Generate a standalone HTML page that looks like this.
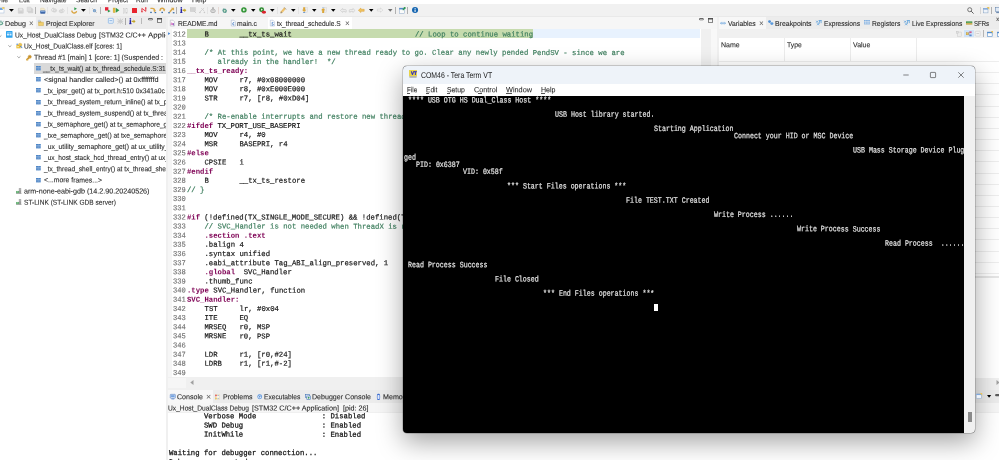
<!DOCTYPE html>
<html><head><meta charset="utf-8"><title>STM32CubeIDE Debug</title>
<style>
html,body{margin:0;padding:0;background:#fff;}
body{width:999px;height:460px;position:relative;overflow:hidden;}
body div,body svg,body span.t{position:absolute;}
span.t{white-space:pre;line-height:12px;height:12px;transform-origin:0 50%;filter:opacity(0.999);}
svg{overflow:visible}
</style></head><body>
<div style="left:0.00px;top:0.00px;width:999.00px;height:3.80px;background:#ffffff;"></div>
<div style="left:0.00px;top:3.80px;width:999.00px;height:13.00px;background:#f1f1f1;"></div>
<div style="left:0.00px;top:16.50px;width:999.00px;height:444.00px;background:#f0f0f0;"></div>
<span class="t" style="left:-2.60px;top:-6px;font:normal 7.2px/12px 'Liberation Sans', sans-serif;color:#2a2a2a;transform:matrix(0.9574,0.0005,0,1,0,0.21);-webkit-text-stroke:0.1px #2a2a2a;">File</span>
<span class="t" style="left:19.00px;top:-6px;font:normal 7.2px/12px 'Liberation Sans', sans-serif;color:#2a2a2a;transform:matrix(0.8716,0.0005,0,1,0,0.21);-webkit-text-stroke:0.1px #2a2a2a;">Edit</span>
<span class="t" style="left:40.00px;top:-6px;font:normal 7.2px/12px 'Liberation Sans', sans-serif;color:#2a2a2a;transform:matrix(0.9339,0.0005,0,1,0,0.21);-webkit-text-stroke:0.1px #2a2a2a;">Navigate</span>
<span class="t" style="left:76.00px;top:-6px;font:normal 7.2px/12px 'Liberation Sans', sans-serif;color:#2a2a2a;transform:matrix(0.9218,0.0005,0,1,0,0.21);-webkit-text-stroke:0.1px #2a2a2a;">Search</span>
<span class="t" style="left:107.50px;top:-6px;font:normal 7.2px/12px 'Liberation Sans', sans-serif;color:#2a2a2a;transform:matrix(0.8939,0.0005,0,1,0,0.21);-webkit-text-stroke:0.1px #2a2a2a;">Project</span>
<span class="t" style="left:136.00px;top:-6px;font:normal 7.2px/12px 'Liberation Sans', sans-serif;color:#2a2a2a;transform:matrix(0.9100,0.0005,0,1,0,0.21);-webkit-text-stroke:0.1px #2a2a2a;">Run</span>
<span class="t" style="left:157.40px;top:-6px;font:normal 7.2px/12px 'Liberation Sans', sans-serif;color:#2a2a2a;transform:matrix(1.0009,0.0005,0,1,0,0.21);-webkit-text-stroke:0.1px #2a2a2a;">Window</span>
<span class="t" style="left:192.00px;top:-6px;font:normal 7.2px/12px 'Liberation Sans', sans-serif;color:#2a2a2a;transform:matrix(0.9664,0.0005,0,1,0,0.21);-webkit-text-stroke:0.1px #2a2a2a;">Help</span>
<div style="left:0.00px;top:16.50px;width:165.50px;height:12.80px;background:#ececec;"></div>
<div style="left:0.00px;top:16.50px;width:36.20px;height:12.80px;background:#f7f7f7;"></div>
<div style="left:0.00px;top:29.30px;width:165.50px;height:431.00px;background:#ffffff;"></div>
<span class="t" style="left:5.00px;top:17px;font:normal 7.2px/12px 'Liberation Sans', sans-serif;color:#2a2a2a;transform:matrix(0.9912,0.0005,0,1,0,0.91);-webkit-text-stroke:0.1px #2a2a2a;">Debug</span>
<span class="t" style="left:29.20px;top:17px;font:normal 9px/12px 'Liberation Sans', sans-serif;color:#666;transform:matrix(0.8736,0.0005,0,1,0,0.18);">×</span>
<span class="t" style="left:46.00px;top:17px;font:normal 7.2px/12px 'Liberation Sans', sans-serif;color:#2a2a2a;transform:matrix(0.9484,0.0005,0,1,0,0.91);-webkit-text-stroke:0.1px #2a2a2a;">Project Explorer</span>
<div style="left:34.00px;top:63.25px;width:131.50px;height:10.90px;background:#d9d9d9;"></div>
<div style="left:0;top:0;width:165.5px;height:460px;overflow:hidden">
<span class="t" style="left:14.80px;top:29px;font:normal 7.2px/12px 'Liberation Sans', sans-serif;color:#2a2a2a;transform:matrix(0.9303,0.0005,0,1,0,0.41);-webkit-text-stroke:0.1px #2a2a2a;">Ux_Host_DualClass Debug</span>
<span class="t" style="left:99.20px;top:29px;font:normal 7.2px/12px 'Liberation Sans', sans-serif;color:#2a2a2a;transform:matrix(0.9763,0.0005,0,1,0,0.41);-webkit-text-stroke:0.1px #2a2a2a;">[STM32 C/C++</span>
<span class="t" style="left:148.20px;top:29px;font:normal 7.2px/12px 'Liberation Sans', sans-serif;color:#2a2a2a;transform:matrix(1.0886,0.0005,0,1,0,0.41);-webkit-text-stroke:0.1px #2a2a2a;">Application]</span>
<span class="t" style="left:24.30px;top:40px;font:normal 7.2px/12px 'Liberation Sans', sans-serif;color:#2a2a2a;transform:matrix(0.9282,0.0005,0,1,0,0.56);-webkit-text-stroke:0.1px #2a2a2a;">Ux_Host_DualClass.elf [cores: 1]</span>
<span class="t" style="left:34.00px;top:51px;font:normal 7.2px/12px 'Liberation Sans', sans-serif;color:#2a2a2a;transform:matrix(0.9696,0.0005,0,1,0,0.71);-webkit-text-stroke:0.1px #2a2a2a;">Thread #1 [main] 1 [core: 1] (Suspended :  Step)</span>
<span class="t" style="left:43.40px;top:62px;font:normal 7.2px/12px 'Liberation Sans', sans-serif;color:#2a2a2a;transform:matrix(0.9036,0.0005,0,1,0,0.86);-webkit-text-stroke:0.1px #2a2a2a;">__tx_ts_wait() at</span>
<span class="t" style="left:92.70px;top:62px;font:normal 7.2px/12px 'Liberation Sans', sans-serif;color:#2a2a2a;transform:matrix(0.9147,0.0005,0,1,0,0.86);-webkit-text-stroke:0.1px #2a2a2a;">tx_thread_schedule.S:312</span>
<span class="t" style="left:44.00px;top:74px;font:normal 7.2px/12px 'Liberation Sans', sans-serif;color:#2a2a2a;transform:matrix(1.0088,0.0005,0,1,0,0.01);-webkit-text-stroke:0.1px #2a2a2a;">&lt;signal handler called&gt;() at 0xfffffffd</span>
<span class="t" style="left:43.60px;top:85px;font:normal 7.2px/12px 'Liberation Sans', sans-serif;color:#2a2a2a;transform:matrix(0.9365,0.0005,0,1,0,0.16);-webkit-text-stroke:0.1px #2a2a2a;">_tx_ipsr_get() at tx_port.h:510 0x341a0c</span>
<span class="t" style="left:43.60px;top:96px;font:normal 7.2px/12px 'Liberation Sans', sans-serif;color:#2a2a2a;transform:matrix(0.9303,0.0005,0,1,0,0.31);-webkit-text-stroke:0.1px #2a2a2a;">_tx_thread_system_return_inline() at tx_port.h</span>
<span class="t" style="left:43.60px;top:107px;font:normal 7.2px/12px 'Liberation Sans', sans-serif;color:#2a2a2a;transform:matrix(0.9323,0.0005,0,1,0,0.46);-webkit-text-stroke:0.1px #2a2a2a;">_tx_thread_system_suspend() at tx_thread_sys</span>
<span class="t" style="left:43.60px;top:118px;font:normal 7.2px/12px 'Liberation Sans', sans-serif;color:#2a2a2a;transform:matrix(0.9356,0.0005,0,1,0,0.61);-webkit-text-stroke:0.1px #2a2a2a;">_tx_semaphore_get() at tx_semaphore_get.c</span>
<span class="t" style="left:43.60px;top:129px;font:normal 7.2px/12px 'Liberation Sans', sans-serif;color:#2a2a2a;transform:matrix(0.9351,0.0005,0,1,0,0.76);-webkit-text-stroke:0.1px #2a2a2a;">_txe_semaphore_get() at txe_semaphore_get</span>
<span class="t" style="left:43.60px;top:140px;font:normal 7.2px/12px 'Liberation Sans', sans-serif;color:#2a2a2a;transform:matrix(0.9383,0.0005,0,1,0,0.91);-webkit-text-stroke:0.1px #2a2a2a;">_ux_utility_semaphore_get() at ux_utility_se</span>
<span class="t" style="left:43.60px;top:152px;font:normal 7.2px/12px 'Liberation Sans', sans-serif;color:#2a2a2a;transform:matrix(0.9179,0.0005,0,1,0,0.06);-webkit-text-stroke:0.1px #2a2a2a;">_ux_host_stack_hcd_thread_entry() at ux_host</span>
<span class="t" style="left:43.60px;top:163px;font:normal 7.2px/12px 'Liberation Sans', sans-serif;color:#2a2a2a;transform:matrix(0.9170,0.0005,0,1,0,0.21);-webkit-text-stroke:0.1px #2a2a2a;">_tx_thread_shell_entry() at tx_thread_shell</span>
<span class="t" style="left:44.00px;top:174px;font:normal 7.2px/12px 'Liberation Sans', sans-serif;color:#2a2a2a;transform:matrix(0.9552,0.0005,0,1,0,0.36);-webkit-text-stroke:0.1px #2a2a2a;">&lt;...more frames...&gt;</span>
<span class="t" style="left:24.00px;top:185px;font:normal 7.2px/12px 'Liberation Sans', sans-serif;color:#2a2a2a;transform:matrix(0.9970,0.0005,0,1,0,0.51);-webkit-text-stroke:0.1px #2a2a2a;">arm-none-eabi-gdb (14.2.90.20240526)</span>
<span class="t" style="left:24.00px;top:196px;font:normal 7.2px/12px 'Liberation Sans', sans-serif;color:#2a2a2a;transform:matrix(0.9140,0.0005,0,1,0,0.66);-webkit-text-stroke:0.1px #2a2a2a;">ST-LINK (ST-LINK GDB server)</span>
</div>
<div style="left:167.50px;top:16.50px;width:549.00px;height:12.80px;background:#f6f6f6;"></div>
<div style="left:0.00px;top:16.20px;width:999.00px;height:0.70px;background:#e9e9e9;"></div>
<div style="left:268.00px;top:16.50px;width:83.50px;height:12.20px;background:#ffffff;"></div>
<div style="left:268.00px;top:28.60px;width:83.50px;height:0.90px;background:#8fb3e6;"></div>
<div style="left:167.50px;top:29.40px;width:549.00px;height:348.00px;background:#ffffff;"></div>
<div style="left:167.50px;top:29.40px;width:4.50px;height:348.00px;background:#f6f6f6;"></div>
<span class="t" style="left:177.50px;top:17px;font:normal 7.2px/12px 'Liberation Sans', sans-serif;color:#2a2a2a;transform:matrix(0.9243,0.0005,0,1,0,0.91);-webkit-text-stroke:0.1px #2a2a2a;">README.md</span>
<span class="t" style="left:237.00px;top:17px;font:normal 7.2px/12px 'Liberation Sans', sans-serif;color:#2a2a2a;transform:matrix(0.9446,0.0005,0,1,0,0.91);-webkit-text-stroke:0.1px #2a2a2a;">main.c</span>
<span class="t" style="left:277.40px;top:17px;font:normal 7.2px/12px 'Liberation Sans', sans-serif;color:#2a2a2a;transform:matrix(0.9147,0.0005,0,1,0,0.91);-webkit-text-stroke:0.1px #2a2a2a;">tx_thread_schedule.S</span>
<span class="t" style="left:344.50px;top:17px;font:normal 9px/12px 'Liberation Sans', sans-serif;color:#666;transform:matrix(0.9116,0.0005,0,1,0,0.18);">×</span>
<div style="left:187.20px;top:29.10px;width:513.10px;height:8.90px;background:#e8f2fe;"></div>
<div style="left:187.20px;top:29.10px;width:345.80px;height:8.90px;background:#c6dbae;"></div>
<div style="left:701.00px;top:29.40px;width:10.00px;height:348.00px;background:#f0f0f0;"></div>
<div style="left:711.00px;top:29.40px;width:5.50px;height:348.00px;background:#f8f8f8;"></div>
<span class="t" style="left:172.80px;top:28px;font:normal 7.5px/12px 'Liberation Mono', monospace;color:#727272;transform:matrix(0.9545,0.0005,0,1,0,0.40);-webkit-text-stroke:0.15px #727272;">312</span>
<span class="t" style="left:187.20px;top:28px;font:normal 7.5px/12px 'Liberation Mono', monospace;color:#1a1a1a;transform:matrix(0.9720,0.0005,0,1,0,0.40);-webkit-text-stroke:0.2px #1a1a1a;">    B       __tx_ts_wait                            </span>
<span class="t" style="left:414.70px;top:28px;font:normal 7.5px/12px 'Liberation Mono', monospace;color:#3f7f5f;transform:matrix(0.9720,0.0005,0,1,0,0.40);-webkit-text-stroke:0.2px #3f7f5f;">// Loop to continue waiting</span>
<span class="t" style="left:172.80px;top:37px;font:normal 7.5px/12px 'Liberation Mono', monospace;color:#727272;transform:matrix(0.9545,0.0005,0,1,0,0.55);-webkit-text-stroke:0.15px #727272;">313</span>
<span class="t" style="left:172.80px;top:46px;font:normal 7.5px/12px 'Liberation Mono', monospace;color:#727272;transform:matrix(0.9545,0.0005,0,1,0,0.70);-webkit-text-stroke:0.15px #727272;">314</span>
<span class="t" style="left:187.20px;top:46px;font:normal 7.5px/12px 'Liberation Mono', monospace;color:#3f7f5f;transform:matrix(0.9721,0.0005,0,1,0,0.70);-webkit-text-stroke:0.2px #3f7f5f;">    /* At this point, we have a new thread ready to go. Clear any newly pended PendSV - since we are</span>
<span class="t" style="left:172.80px;top:55px;font:normal 7.5px/12px 'Liberation Mono', monospace;color:#727272;transform:matrix(0.9545,0.0005,0,1,0,0.85);-webkit-text-stroke:0.15px #727272;">315</span>
<span class="t" style="left:187.20px;top:55px;font:normal 7.5px/12px 'Liberation Mono', monospace;color:#3f7f5f;transform:matrix(0.9720,0.0005,0,1,0,0.85);-webkit-text-stroke:0.2px #3f7f5f;">       already in the handler!  */</span>
<span class="t" style="left:172.80px;top:65px;font:normal 7.5px/12px 'Liberation Mono', monospace;color:#727272;transform:matrix(0.9545,0.0005,0,1,0,0.00);-webkit-text-stroke:0.15px #727272;">316</span>
<span class="t" style="left:187.20px;top:65px;font:bold 7.5px/12px 'Liberation Mono', monospace;color:#7f0055;transform:matrix(0.9720,0.0005,0,1,0,0.00);-webkit-text-stroke:0.05px #7f0055;">__tx_ts_ready:</span>
<span class="t" style="left:172.80px;top:74px;font:normal 7.5px/12px 'Liberation Mono', monospace;color:#727272;transform:matrix(0.9545,0.0005,0,1,0,0.15);-webkit-text-stroke:0.15px #727272;">317</span>
<span class="t" style="left:187.20px;top:74px;font:normal 7.5px/12px 'Liberation Mono', monospace;color:#1a1a1a;transform:matrix(0.9720,0.0005,0,1,0,0.15);-webkit-text-stroke:0.2px #1a1a1a;">    MOV     r7, #0x08000000</span>
<span class="t" style="left:172.80px;top:83px;font:normal 7.5px/12px 'Liberation Mono', monospace;color:#727272;transform:matrix(0.9545,0.0005,0,1,0,0.30);-webkit-text-stroke:0.15px #727272;">318</span>
<span class="t" style="left:187.20px;top:83px;font:normal 7.5px/12px 'Liberation Mono', monospace;color:#1a1a1a;transform:matrix(0.9720,0.0005,0,1,0,0.30);-webkit-text-stroke:0.2px #1a1a1a;">    MOV     r8, #0xE000E000</span>
<span class="t" style="left:172.80px;top:92px;font:normal 7.5px/12px 'Liberation Mono', monospace;color:#727272;transform:matrix(0.9545,0.0005,0,1,0,0.45);-webkit-text-stroke:0.15px #727272;">319</span>
<span class="t" style="left:187.20px;top:92px;font:normal 7.5px/12px 'Liberation Mono', monospace;color:#1a1a1a;transform:matrix(0.9720,0.0005,0,1,0,0.45);-webkit-text-stroke:0.2px #1a1a1a;">    STR     r7, [r8, #0xD04]</span>
<span class="t" style="left:172.80px;top:101px;font:normal 7.5px/12px 'Liberation Mono', monospace;color:#727272;transform:matrix(0.9545,0.0005,0,1,0,0.60);-webkit-text-stroke:0.15px #727272;">320</span>
<span class="t" style="left:172.80px;top:110px;font:normal 7.5px/12px 'Liberation Mono', monospace;color:#727272;transform:matrix(0.9545,0.0005,0,1,0,0.75);-webkit-text-stroke:0.15px #727272;">321</span>
<span class="t" style="left:187.20px;top:110px;font:normal 7.5px/12px 'Liberation Mono', monospace;color:#3f7f5f;transform:matrix(0.9720,0.0005,0,1,0,0.75);-webkit-text-stroke:0.2px #3f7f5f;">    /* Re-enable interrupts and restore new thread.  */</span>
<span class="t" style="left:172.80px;top:119px;font:normal 7.5px/12px 'Liberation Mono', monospace;color:#727272;transform:matrix(0.9545,0.0005,0,1,0,0.90);-webkit-text-stroke:0.15px #727272;">322</span>
<span class="t" style="left:187.20px;top:119px;font:bold 7.5px/12px 'Liberation Mono', monospace;color:#7f0055;transform:matrix(0.9717,0.0005,0,1,0,0.90);-webkit-text-stroke:0.05px #7f0055;">#ifdef</span>
<span class="t" style="left:213.45px;top:119px;font:normal 7.5px/12px 'Liberation Mono', monospace;color:#1a1a1a;transform:matrix(0.9721,0.0005,0,1,0,0.90);-webkit-text-stroke:0.2px #1a1a1a;"> TX_PORT_USE_BASEPRI</span>
<span class="t" style="left:172.80px;top:129px;font:normal 7.5px/12px 'Liberation Mono', monospace;color:#727272;transform:matrix(0.9545,0.0005,0,1,0,0.05);-webkit-text-stroke:0.15px #727272;">323</span>
<span class="t" style="left:187.20px;top:129px;font:normal 7.5px/12px 'Liberation Mono', monospace;color:#1a1a1a;transform:matrix(0.9720,0.0005,0,1,0,0.05);-webkit-text-stroke:0.2px #1a1a1a;">    MOV     r4, #0</span>
<span class="t" style="left:172.80px;top:138px;font:normal 7.5px/12px 'Liberation Mono', monospace;color:#727272;transform:matrix(0.9545,0.0005,0,1,0,0.20);-webkit-text-stroke:0.15px #727272;">324</span>
<span class="t" style="left:187.20px;top:138px;font:normal 7.5px/12px 'Liberation Mono', monospace;color:#1a1a1a;transform:matrix(0.9719,0.0005,0,1,0,0.20);-webkit-text-stroke:0.2px #1a1a1a;">    MSR     BASEPRI, r4</span>
<span class="t" style="left:172.80px;top:147px;font:normal 7.5px/12px 'Liberation Mono', monospace;color:#727272;transform:matrix(0.9545,0.0005,0,1,0,0.35);-webkit-text-stroke:0.15px #727272;">325</span>
<span class="t" style="left:187.20px;top:147px;font:bold 7.5px/12px 'Liberation Mono', monospace;color:#7f0055;transform:matrix(0.9715,0.0005,0,1,0,0.35);-webkit-text-stroke:0.05px #7f0055;">#else</span>
<span class="t" style="left:172.80px;top:156px;font:normal 7.5px/12px 'Liberation Mono', monospace;color:#727272;transform:matrix(0.9545,0.0005,0,1,0,0.50);-webkit-text-stroke:0.15px #727272;">326</span>
<span class="t" style="left:187.20px;top:156px;font:normal 7.5px/12px 'Liberation Mono', monospace;color:#1a1a1a;transform:matrix(0.9720,0.0005,0,1,0,0.50);-webkit-text-stroke:0.2px #1a1a1a;">    CPSIE   i</span>
<span class="t" style="left:172.80px;top:165px;font:normal 7.5px/12px 'Liberation Mono', monospace;color:#727272;transform:matrix(0.9545,0.0005,0,1,0,0.65);-webkit-text-stroke:0.15px #727272;">327</span>
<span class="t" style="left:187.20px;top:165px;font:bold 7.5px/12px 'Liberation Mono', monospace;color:#7f0055;transform:matrix(0.9717,0.0005,0,1,0,0.65);-webkit-text-stroke:0.05px #7f0055;">#endif</span>
<span class="t" style="left:172.80px;top:174px;font:normal 7.5px/12px 'Liberation Mono', monospace;color:#727272;transform:matrix(0.9545,0.0005,0,1,0,0.80);-webkit-text-stroke:0.15px #727272;">328</span>
<span class="t" style="left:187.20px;top:174px;font:normal 7.5px/12px 'Liberation Mono', monospace;color:#1a1a1a;transform:matrix(0.9720,0.0005,0,1,0,0.80);-webkit-text-stroke:0.2px #1a1a1a;">    B       __tx_ts_restore</span>
<span class="t" style="left:172.80px;top:183px;font:normal 7.5px/12px 'Liberation Mono', monospace;color:#727272;transform:matrix(0.9545,0.0005,0,1,0,0.95);-webkit-text-stroke:0.15px #727272;">329</span>
<span class="t" style="left:187.20px;top:183px;font:normal 7.5px/12px 'Liberation Mono', monospace;color:#3f7f5f;transform:matrix(0.9714,0.0005,0,1,0,0.95);-webkit-text-stroke:0.2px #3f7f5f;">// }</span>
<span class="t" style="left:172.80px;top:193px;font:normal 7.5px/12px 'Liberation Mono', monospace;color:#727272;transform:matrix(0.9545,0.0005,0,1,0,0.10);-webkit-text-stroke:0.15px #727272;">330</span>
<span class="t" style="left:172.80px;top:202px;font:normal 7.5px/12px 'Liberation Mono', monospace;color:#727272;transform:matrix(0.9545,0.0005,0,1,0,0.25);-webkit-text-stroke:0.15px #727272;">331</span>
<span class="t" style="left:172.80px;top:211px;font:normal 7.5px/12px 'Liberation Mono', monospace;color:#727272;transform:matrix(0.9545,0.0005,0,1,0,0.40);-webkit-text-stroke:0.15px #727272;">332</span>
<span class="t" style="left:187.20px;top:211px;font:bold 7.5px/12px 'Liberation Mono', monospace;color:#7f0055;transform:matrix(0.9711,0.0005,0,1,0,0.40);-webkit-text-stroke:0.05px #7f0055;">#if</span>
<span class="t" style="left:200.32px;top:211px;font:normal 7.5px/12px 'Liberation Mono', monospace;color:#1a1a1a;transform:matrix(0.9720,0.0005,0,1,0,0.40);-webkit-text-stroke:0.2px #1a1a1a;"> (!defined(TX_SINGLE_MODE_SECURE) &amp;&amp; !defined(TX_SINGLE_MODE_NON_SECURE))</span>
<span class="t" style="left:172.80px;top:220px;font:normal 7.5px/12px 'Liberation Mono', monospace;color:#727272;transform:matrix(0.9545,0.0005,0,1,0,0.55);-webkit-text-stroke:0.15px #727272;">333</span>
<span class="t" style="left:187.20px;top:220px;font:normal 7.5px/12px 'Liberation Mono', monospace;color:#3f7f5f;transform:matrix(0.9720,0.0005,0,1,0,0.55);-webkit-text-stroke:0.2px #3f7f5f;">    // SVC_Handler is not needed when ThreadX is running in single mode.</span>
<span class="t" style="left:172.80px;top:229px;font:normal 7.5px/12px 'Liberation Mono', monospace;color:#727272;transform:matrix(0.9545,0.0005,0,1,0,0.70);-webkit-text-stroke:0.15px #727272;">334</span>
<span class="t" style="left:187.20px;top:229px;font:bold 7.5px/12px 'Liberation Mono', monospace;color:#7f0055;transform:matrix(0.9720,0.0005,0,1,0,0.70);-webkit-text-stroke:0.05px #7f0055;">    .section .text</span>
<span class="t" style="left:172.80px;top:238px;font:normal 7.5px/12px 'Liberation Mono', monospace;color:#727272;transform:matrix(0.9545,0.0005,0,1,0,0.85);-webkit-text-stroke:0.15px #727272;">335</span>
<span class="t" style="left:187.20px;top:238px;font:normal 7.5px/12px 'Liberation Mono', monospace;color:#1a1a1a;transform:matrix(0.9720,0.0005,0,1,0,0.85);-webkit-text-stroke:0.2px #1a1a1a;">    .balign 4</span>
<span class="t" style="left:172.80px;top:248px;font:normal 7.5px/12px 'Liberation Mono', monospace;color:#727272;transform:matrix(0.9545,0.0005,0,1,0,0.00);-webkit-text-stroke:0.15px #727272;">336</span>
<span class="t" style="left:187.20px;top:248px;font:normal 7.5px/12px 'Liberation Mono', monospace;color:#1a1a1a;transform:matrix(0.9720,0.0005,0,1,0,0.00);-webkit-text-stroke:0.2px #1a1a1a;">    .syntax unified</span>
<span class="t" style="left:172.80px;top:257px;font:normal 7.5px/12px 'Liberation Mono', monospace;color:#727272;transform:matrix(0.9545,0.0005,0,1,0,0.15);-webkit-text-stroke:0.15px #727272;">337</span>
<span class="t" style="left:187.20px;top:257px;font:normal 7.5px/12px 'Liberation Mono', monospace;color:#1a1a1a;transform:matrix(0.9720,0.0005,0,1,0,0.15);-webkit-text-stroke:0.2px #1a1a1a;">    .eabi_attribute Tag_ABI_align_preserved, 1</span>
<span class="t" style="left:172.80px;top:266px;font:normal 7.5px/12px 'Liberation Mono', monospace;color:#727272;transform:matrix(0.9545,0.0005,0,1,0,0.30);-webkit-text-stroke:0.15px #727272;">338</span>
<span class="t" style="left:187.20px;top:266px;font:bold 7.5px/12px 'Liberation Mono', monospace;color:#7f0055;transform:matrix(0.9719,0.0005,0,1,0,0.30);-webkit-text-stroke:0.05px #7f0055;">    .global</span>
<span class="t" style="left:235.32px;top:266px;font:normal 7.5px/12px 'Liberation Mono', monospace;color:#1a1a1a;transform:matrix(0.9720,0.0005,0,1,0,0.30);-webkit-text-stroke:0.2px #1a1a1a;">  SVC_Handler</span>
<span class="t" style="left:172.80px;top:275px;font:normal 7.5px/12px 'Liberation Mono', monospace;color:#727272;transform:matrix(0.9545,0.0005,0,1,0,0.45);-webkit-text-stroke:0.15px #727272;">339</span>
<span class="t" style="left:187.20px;top:275px;font:normal 7.5px/12px 'Liberation Mono', monospace;color:#1a1a1a;transform:matrix(0.9720,0.0005,0,1,0,0.45);-webkit-text-stroke:0.2px #1a1a1a;">    .thumb_func</span>
<span class="t" style="left:172.80px;top:284px;font:normal 7.5px/12px 'Liberation Mono', monospace;color:#727272;transform:matrix(0.9545,0.0005,0,1,0,0.60);-webkit-text-stroke:0.15px #727272;">340</span>
<span class="t" style="left:187.20px;top:284px;font:bold 7.5px/12px 'Liberation Mono', monospace;color:#7f0055;transform:matrix(0.9715,0.0005,0,1,0,0.60);-webkit-text-stroke:0.05px #7f0055;">.type</span>
<span class="t" style="left:209.07px;top:284px;font:normal 7.5px/12px 'Liberation Mono', monospace;color:#1a1a1a;transform:matrix(0.9719,0.0005,0,1,0,0.60);-webkit-text-stroke:0.2px #1a1a1a;"> SVC_Handler, function</span>
<span class="t" style="left:172.80px;top:293px;font:normal 7.5px/12px 'Liberation Mono', monospace;color:#727272;transform:matrix(0.9545,0.0005,0,1,0,0.75);-webkit-text-stroke:0.15px #727272;">341</span>
<span class="t" style="left:187.20px;top:293px;font:bold 7.5px/12px 'Liberation Mono', monospace;color:#7f0055;transform:matrix(0.9719,0.0005,0,1,0,0.75);-webkit-text-stroke:0.05px #7f0055;">SVC_Handler:</span>
<span class="t" style="left:172.80px;top:302px;font:normal 7.5px/12px 'Liberation Mono', monospace;color:#727272;transform:matrix(0.9545,0.0005,0,1,0,0.90);-webkit-text-stroke:0.15px #727272;">342</span>
<span class="t" style="left:187.20px;top:302px;font:normal 7.5px/12px 'Liberation Mono', monospace;color:#1a1a1a;transform:matrix(0.9721,0.0005,0,1,0,0.90);-webkit-text-stroke:0.2px #1a1a1a;">    TST     lr, #0x04</span>
<span class="t" style="left:172.80px;top:312px;font:normal 7.5px/12px 'Liberation Mono', monospace;color:#727272;transform:matrix(0.9545,0.0005,0,1,0,0.05);-webkit-text-stroke:0.15px #727272;">343</span>
<span class="t" style="left:187.20px;top:312px;font:normal 7.5px/12px 'Liberation Mono', monospace;color:#1a1a1a;transform:matrix(0.9720,0.0005,0,1,0,0.05);-webkit-text-stroke:0.2px #1a1a1a;">    ITE     EQ</span>
<span class="t" style="left:172.80px;top:321px;font:normal 7.5px/12px 'Liberation Mono', monospace;color:#727272;transform:matrix(0.9545,0.0005,0,1,0,0.20);-webkit-text-stroke:0.15px #727272;">344</span>
<span class="t" style="left:187.20px;top:321px;font:normal 7.5px/12px 'Liberation Mono', monospace;color:#1a1a1a;transform:matrix(0.9720,0.0005,0,1,0,0.20);-webkit-text-stroke:0.2px #1a1a1a;">    MRSEQ   r0, MSP</span>
<span class="t" style="left:172.80px;top:330px;font:normal 7.5px/12px 'Liberation Mono', monospace;color:#727272;transform:matrix(0.9545,0.0005,0,1,0,0.35);-webkit-text-stroke:0.15px #727272;">345</span>
<span class="t" style="left:187.20px;top:330px;font:normal 7.5px/12px 'Liberation Mono', monospace;color:#1a1a1a;transform:matrix(0.9720,0.0005,0,1,0,0.35);-webkit-text-stroke:0.2px #1a1a1a;">    MRSNE   r0, PSP</span>
<span class="t" style="left:172.80px;top:339px;font:normal 7.5px/12px 'Liberation Mono', monospace;color:#727272;transform:matrix(0.9545,0.0005,0,1,0,0.50);-webkit-text-stroke:0.15px #727272;">346</span>
<span class="t" style="left:172.80px;top:348px;font:normal 7.5px/12px 'Liberation Mono', monospace;color:#727272;transform:matrix(0.9545,0.0005,0,1,0,0.65);-webkit-text-stroke:0.15px #727272;">347</span>
<span class="t" style="left:187.20px;top:348px;font:normal 7.5px/12px 'Liberation Mono', monospace;color:#1a1a1a;transform:matrix(0.9719,0.0005,0,1,0,0.65);-webkit-text-stroke:0.2px #1a1a1a;">    LDR     r1, [r0,#24]</span>
<span class="t" style="left:172.80px;top:357px;font:normal 7.5px/12px 'Liberation Mono', monospace;color:#727272;transform:matrix(0.9545,0.0005,0,1,0,0.80);-webkit-text-stroke:0.15px #727272;">348</span>
<span class="t" style="left:187.20px;top:357px;font:normal 7.5px/12px 'Liberation Mono', monospace;color:#1a1a1a;transform:matrix(0.9719,0.0005,0,1,0,0.80);-webkit-text-stroke:0.2px #1a1a1a;">    LDRB    r1, [r1,#-2]</span>
<span class="t" style="left:172.80px;top:366px;font:normal 7.5px/12px 'Liberation Mono', monospace;color:#727272;transform:matrix(0.9545,0.0005,0,1,0,0.95);-webkit-text-stroke:0.15px #727272;">349</span>
<div style="left:167.50px;top:377.50px;width:549.00px;height:9.40px;background:#f0f0f0;"></div>
<div style="left:167.50px;top:377.50px;width:18.70px;height:10.50px;background:#f6f6f6;"></div>
<svg style="left:189.50px;top:379.80px" width="4" height="5" viewBox="0 0 4 5"><path d="M3.5 0 L0.3 2.5 L3.5 5 Z" fill="#a0a0a0"/></svg>
<div style="left:718.60px;top:16.50px;width:280.40px;height:12.80px;background:#ececec;"></div>
<div style="left:718.60px;top:16.50px;width:47.20px;height:12.80px;background:#f7f7f7;"></div>
<div style="left:718.60px;top:29.30px;width:280.40px;height:8.60px;background:#f0f0f0;"></div>
<div style="left:718.60px;top:37.90px;width:280.40px;height:342.00px;background:#ffffff;"></div>
<span class="t" style="left:727.80px;top:17px;font:normal 7.2px/12px 'Liberation Sans', sans-serif;color:#2a2a2a;transform:matrix(0.9410,0.0005,0,1,0,0.91);-webkit-text-stroke:0.1px #2a2a2a;">Variables</span>
<span class="t" style="left:775.40px;top:17px;font:normal 7.2px/12px 'Liberation Sans', sans-serif;color:#2a2a2a;transform:matrix(0.9640,0.0005,0,1,0,0.91);-webkit-text-stroke:0.1px #2a2a2a;">Breakpoints</span>
<span class="t" style="left:824.00px;top:17px;font:normal 7.2px/12px 'Liberation Sans', sans-serif;color:#2a2a2a;transform:matrix(0.9194,0.0005,0,1,0,0.91);-webkit-text-stroke:0.1px #2a2a2a;">Expressions</span>
<span class="t" style="left:871.70px;top:17px;font:normal 7.2px/12px 'Liberation Sans', sans-serif;color:#2a2a2a;transform:matrix(0.9322,0.0005,0,1,0,0.91);-webkit-text-stroke:0.1px #2a2a2a;">Registers</span>
<span class="t" style="left:911.70px;top:17px;font:normal 7.2px/12px 'Liberation Sans', sans-serif;color:#2a2a2a;transform:matrix(0.9256,0.0005,0,1,0,0.91);-webkit-text-stroke:0.1px #2a2a2a;">Live Expressions</span>
<span class="t" style="left:973.70px;top:17px;font:normal 7.2px/12px 'Liberation Sans', sans-serif;color:#2a2a2a;transform:matrix(0.8348,0.0005,0,1,0,0.91);-webkit-text-stroke:0.1px #2a2a2a;">SFRs</span>
<span class="t" style="left:758.60px;top:17px;font:normal 9px/12px 'Liberation Sans', sans-serif;color:#666;transform:matrix(0.9116,0.0005,0,1,0,0.18);">×</span>
<span class="t" style="left:721.00px;top:39px;font:normal 7.2px/12px 'Liberation Sans', sans-serif;color:#2a2a2a;transform:matrix(0.9746,0.0005,0,1,0,0.31);-webkit-text-stroke:0.1px #2a2a2a;">Name</span>
<span class="t" style="left:787.00px;top:39px;font:normal 7.2px/12px 'Liberation Sans', sans-serif;color:#2a2a2a;transform:matrix(0.9491,0.0005,0,1,0,0.31);-webkit-text-stroke:0.1px #2a2a2a;">Type</span>
<span class="t" style="left:852.70px;top:39px;font:normal 7.2px/12px 'Liberation Sans', sans-serif;color:#2a2a2a;transform:matrix(0.9687,0.0005,0,1,0,0.31);-webkit-text-stroke:0.1px #2a2a2a;">Value</span>
<div style="left:783.90px;top:37.90px;width:0.80px;height:23.40px;background:#ececec;"></div>
<div style="left:849.90px;top:37.90px;width:0.80px;height:23.40px;background:#ececec;"></div>
<div style="left:915.60px;top:37.90px;width:0.80px;height:23.40px;background:#ececec;"></div>
<div style="left:718.60px;top:61.00px;width:280.40px;height:0.80px;background:#eeeeee;"></div>
<div style="left:718.60px;top:72.15px;width:280.40px;height:0.80px;background:#eeeeee;"></div>
<div style="left:718.60px;top:83.30px;width:280.40px;height:0.80px;background:#eeeeee;"></div>
<div style="left:718.60px;top:94.45px;width:280.40px;height:0.80px;background:#eeeeee;"></div>
<div style="left:718.60px;top:105.60px;width:280.40px;height:0.80px;background:#eeeeee;"></div>
<div style="left:718.60px;top:116.75px;width:280.40px;height:0.80px;background:#eeeeee;"></div>
<div style="left:718.60px;top:127.90px;width:280.40px;height:0.80px;background:#eeeeee;"></div>
<div style="left:718.60px;top:139.05px;width:280.40px;height:0.80px;background:#eeeeee;"></div>
<div style="left:718.60px;top:150.20px;width:280.40px;height:0.80px;background:#eeeeee;"></div>
<div style="left:718.60px;top:161.35px;width:280.40px;height:0.80px;background:#eeeeee;"></div>
<div style="left:718.60px;top:172.50px;width:280.40px;height:0.80px;background:#eeeeee;"></div>
<div style="left:718.60px;top:183.65px;width:280.40px;height:0.80px;background:#eeeeee;"></div>
<div style="left:718.60px;top:194.80px;width:280.40px;height:0.80px;background:#eeeeee;"></div>
<div style="left:718.60px;top:205.95px;width:280.40px;height:0.80px;background:#eeeeee;"></div>
<div style="left:718.60px;top:217.10px;width:280.40px;height:0.80px;background:#eeeeee;"></div>
<div style="left:718.60px;top:228.25px;width:280.40px;height:0.80px;background:#eeeeee;"></div>
<div style="left:718.60px;top:239.40px;width:280.40px;height:0.80px;background:#eeeeee;"></div>
<div style="left:718.60px;top:250.55px;width:280.40px;height:0.80px;background:#eeeeee;"></div>
<div style="left:718.60px;top:261.70px;width:280.40px;height:0.80px;background:#eeeeee;"></div>
<div style="left:718.60px;top:272.85px;width:280.40px;height:0.80px;background:#eeeeee;"></div>
<div style="left:718.60px;top:275.50px;width:280.40px;height:2.20px;background:#e6e6e6;"></div>
<div style="left:718.60px;top:277.50px;width:280.40px;height:100.00px;background:#ffffff;"></div>
<div style="left:718.60px;top:377.50px;width:280.40px;height:9.40px;background:#f0f0f0;"></div>
<svg style="left:995.50px;top:379.80px" width="4" height="5" viewBox="0 0 4 5"><path d="M0.5 0 L3.7 2.5 L0.5 5 Z" fill="#a0a0a0"/></svg>
<div style="left:167.50px;top:389.60px;width:831.50px;height:13.60px;background:#ececec;"></div>
<div style="left:167.50px;top:389.60px;width:45.80px;height:13.60px;background:#f7f7f7;"></div>
<div style="left:167.50px;top:403.20px;width:831.50px;height:9.30px;background:#f6f6f6;"></div>
<div style="left:167.50px;top:412.50px;width:831.50px;height:48.00px;background:#ffffff;"></div>
<span class="t" style="left:177.00px;top:391px;font:normal 7.2px/12px 'Liberation Sans', sans-serif;color:#2a2a2a;transform:matrix(0.9858,0.0005,0,1,0,0.31);-webkit-text-stroke:0.1px #2a2a2a;">Console</span>
<span class="t" style="left:222.50px;top:391px;font:normal 7.2px/12px 'Liberation Sans', sans-serif;color:#2a2a2a;transform:matrix(0.9717,0.0005,0,1,0,0.31);-webkit-text-stroke:0.1px #2a2a2a;">Problems</span>
<span class="t" style="left:263.70px;top:391px;font:normal 7.2px/12px 'Liberation Sans', sans-serif;color:#2a2a2a;transform:matrix(0.9271,0.0005,0,1,0,0.31);-webkit-text-stroke:0.1px #2a2a2a;">Executables</span>
<span class="t" style="left:311.70px;top:391px;font:normal 7.2px/12px 'Liberation Sans', sans-serif;color:#2a2a2a;transform:matrix(0.9844,0.0005,0,1,0,0.31);-webkit-text-stroke:0.1px #2a2a2a;">Debugger Console</span>
<span class="t" style="left:383.00px;top:391px;font:normal 7.2px/12px 'Liberation Sans', sans-serif;color:#2a2a2a;transform:matrix(0.9908,0.0005,0,1,0,0.31);-webkit-text-stroke:0.1px #2a2a2a;">Memory</span>
<span class="t" style="left:205.60px;top:390px;font:normal 9px/12px 'Liberation Sans', sans-serif;color:#666;transform:matrix(0.9875,0.0005,0,1,0,0.68);">×</span>
<span class="t" style="left:168.20px;top:402px;font:normal 7.2px/12px 'Liberation Sans', sans-serif;color:#2a2a2a;transform:matrix(0.9257,0.0005,0,1,0,0.51);-webkit-text-stroke:0.1px #2a2a2a;">Ux_Host_DualClass Debug</span>
<span class="t" style="left:251.70px;top:402px;font:normal 7.2px/12px 'Liberation Sans', sans-serif;color:#2a2a2a;transform:matrix(1.0034,0.0005,0,1,0,0.51);-webkit-text-stroke:0.1px #2a2a2a;">[STM32 C/C++ Application]</span>
<span class="t" style="left:343.20px;top:402px;font:normal 7.2px/12px 'Liberation Sans', sans-serif;color:#2a2a2a;transform:matrix(0.9969,0.0005,0,1,0,0.51);-webkit-text-stroke:0.1px #2a2a2a;">[pid: 26]</span>
<span class="t" style="left:168.70px;top:410px;font:normal 7.5px/12px 'Liberation Mono', monospace;color:#111;transform:matrix(0.9698,0.0005,0,1,0,0.25);clip-path:inset(2.4px -5px -5px -5px);-webkit-text-stroke:0.25px #111;">        Verbose Mode               : Disabled</span>
<span class="t" style="left:168.70px;top:419px;font:normal 7.5px/12px 'Liberation Mono', monospace;color:#111;transform:matrix(0.9698,0.0005,0,1,0,0.45);clip-path:inset(0.0px -5px -5px -5px);-webkit-text-stroke:0.25px #111;">        SWD Debug                  : Enabled</span>
<span class="t" style="left:168.70px;top:428px;font:normal 7.5px/12px 'Liberation Mono', monospace;color:#111;transform:matrix(0.9698,0.0005,0,1,0,0.55);clip-path:inset(0.0px -5px -5px -5px);-webkit-text-stroke:0.25px #111;">        InitWhile                  : Enabled</span>
<span class="t" style="left:168.70px;top:446px;font:normal 7.5px/12px 'Liberation Mono', monospace;color:#111;transform:matrix(0.9698,0.0005,0,1,0,0.95);clip-path:inset(0.0px -5px -5px -5px);-webkit-text-stroke:0.25px #111;">Waiting for debugger connection...</span>
<span class="t" style="left:168.70px;top:456px;font:normal 7.5px/12px 'Liberation Mono', monospace;color:#111;transform:matrix(0.9698,0.0005,0,1,0,0.15);clip-path:inset(0.0px -5px -5px -5px);-webkit-text-stroke:0.25px #111;">Debugger connected</span>
<div style="left:403.1px;top:65.7px;width:572.2px;height:367.3px;border-radius:4px;box-shadow:0 9px 26px rgba(0,0,0,0.36),0 0 0 0.7px rgba(0,0,0,0.22);background:#000;overflow:hidden"><div style="left:0;top:0;width:100%;height:18.2px;background:#eef3f9"></div><div style="left:0;top:18.2px;width:100%;height:12.1px;background:#ffffff"></div><div style="left:561.2px;top:30.3px;width:11.0px;height:337.0px;background:#f0f0f0"></div><div style="left:564.7px;top:346.5px;width:4px;height:10px;background:#8a8a8a"></div></div>
<svg style="left:409.00px;top:70.10px" width="8.6" height="8.2" viewBox="0 0 8.6 8.2"><rect x="0" y="0" width="8" height="6.4" fill="#e8d44a"/><rect x="0.4" y="6.4" width="7.2" height="1.2" fill="#9a9a9a"/></svg>
<span class="t" style="left:410.60px;top:67px;font:bold 4.8px/12px 'Liberation Sans', sans-serif;color:#1818d0;transform:matrix(0.9120,0.0005,0,1,0,0.64);-webkit-text-stroke:0.3px #1818d0;">VT</span>
<span class="t" style="left:420.60px;top:69px;font:normal 8.3px/12px 'Liberation Sans', sans-serif;color:#1a1a1a;transform:matrix(0.8320,0.0005,0,1,0,0.02);">COM46 - Tera Term VT</span>
<span class="t" style="left:406.90px;top:84px;font:normal 7.6px/12px 'Liberation Sans', sans-serif;color:#1a1a1a;transform:matrix(0.8327,0.0005,0,1,0,0.17);-webkit-text-stroke:0.05px #1a1a1a;">File</span>
<span class="t" style="left:426.10px;top:84px;font:normal 7.6px/12px 'Liberation Sans', sans-serif;color:#1a1a1a;transform:matrix(0.8706,0.0005,0,1,0,0.17);-webkit-text-stroke:0.05px #1a1a1a;">Edit</span>
<span class="t" style="left:446.90px;top:84px;font:normal 7.6px/12px 'Liberation Sans', sans-serif;color:#1a1a1a;transform:matrix(0.9013,0.0005,0,1,0,0.17);-webkit-text-stroke:0.05px #1a1a1a;">Setup</span>
<span class="t" style="left:473.80px;top:84px;font:normal 7.6px/12px 'Liberation Sans', sans-serif;color:#1a1a1a;transform:matrix(0.9516,0.0005,0,1,0,0.17);-webkit-text-stroke:0.05px #1a1a1a;">Control</span>
<span class="t" style="left:506.00px;top:84px;font:normal 7.6px/12px 'Liberation Sans', sans-serif;color:#1a1a1a;transform:matrix(0.9624,0.0005,0,1,0,0.17);-webkit-text-stroke:0.05px #1a1a1a;">Window</span>
<span class="t" style="left:541.00px;top:84px;font:normal 7.6px/12px 'Liberation Sans', sans-serif;color:#1a1a1a;transform:matrix(0.9280,0.0005,0,1,0,0.17);-webkit-text-stroke:0.05px #1a1a1a;">Help</span>
<div style="left:406.90px;top:93.40px;width:3.20px;height:0.55px;background:#555;"></div>
<div style="left:426.10px;top:93.40px;width:3.40px;height:0.55px;background:#555;"></div>
<div style="left:446.90px;top:93.40px;width:3.60px;height:0.55px;background:#555;"></div>
<div style="left:478.20px;top:93.40px;width:3.80px;height:0.55px;background:#555;"></div>
<div style="left:506.00px;top:93.40px;width:6.00px;height:0.55px;background:#555;"></div>
<div style="left:541.00px;top:93.40px;width:4.20px;height:0.55px;background:#555;"></div>
<svg style="left:903.00px;top:72.00px" width="6" height="6" viewBox="0 0 6 6"><path d="M0.3 3 H5.7" stroke="#333" stroke-width="0.6"/></svg>
<svg style="left:930.00px;top:72.00px" width="6" height="6" viewBox="0 0 6 6"><rect x="0.4" y="0.4" width="5.2" height="5.2" rx="0.6" fill="none" stroke="#333" stroke-width="0.6"/></svg>
<svg style="left:958.00px;top:72.00px" width="6" height="6" viewBox="0 0 6 6"><path d="M0.3 0.3 L5.7 5.7 M5.7 0.3 L0.3 5.7" stroke="#333" stroke-width="0.6"/></svg>
<span class="t" style="left:407.58px;top:94px;font:normal 8.2px/12px 'Liberation Mono', monospace;color:#e2e2e2;transform:matrix(0.8094,0.0005,0,1,0,0.41);-webkit-text-stroke:0.22px #e2e2e2;">**** USB OTG HS Dual_Class Host ****</span>
<span class="t" style="left:554.73px;top:108px;font:normal 8.2px/12px 'Liberation Mono', monospace;color:#e2e2e2;transform:matrix(0.8094,0.0005,0,1,0,0.74);-webkit-text-stroke:0.22px #e2e2e2;">USB Host library started.</span>
<span class="t" style="left:654.15px;top:123px;font:normal 8.2px/12px 'Liberation Mono', monospace;color:#e2e2e2;transform:matrix(0.8093,0.0005,0,1,0,0.07);-webkit-text-stroke:0.22px #e2e2e2;">Starting Application</span>
<span class="t" style="left:733.69px;top:130px;font:normal 8.2px/12px 'Liberation Mono', monospace;color:#e2e2e2;transform:matrix(0.8094,0.0005,0,1,0,0.23);-webkit-text-stroke:0.22px #e2e2e2;">Connect your HID or MSC Device</span>
<span class="t" style="left:853.00px;top:144px;font:normal 8.2px/12px 'Liberation Mono', monospace;color:#e2e2e2;transform:matrix(0.8094,0.0005,0,1,0,0.55);-webkit-text-stroke:0.22px #e2e2e2;">USB Mass Storage Device Plug</span>
<span class="t" style="left:403.60px;top:151px;font:normal 8.2px/12px 'Liberation Mono', monospace;color:#e2e2e2;transform:matrix(0.8089,0.0005,0,1,0,0.72);-webkit-text-stroke:0.22px #e2e2e2;">ged</span>
<span class="t" style="left:415.53px;top:158px;font:normal 8.2px/12px 'Liberation Mono', monospace;color:#e2e2e2;transform:matrix(0.8094,0.0005,0,1,0,0.88);-webkit-text-stroke:0.22px #e2e2e2;">PID: 0x6387</span>
<span class="t" style="left:463.25px;top:166px;font:normal 8.2px/12px 'Liberation Mono', monospace;color:#e2e2e2;transform:matrix(0.8093,0.0005,0,1,0,0.04);-webkit-text-stroke:0.22px #e2e2e2;">VID: 0x58f</span>
<span class="t" style="left:507.00px;top:180px;font:normal 8.2px/12px 'Liberation Mono', monospace;color:#e2e2e2;transform:matrix(0.8094,0.0005,0,1,0,0.37);-webkit-text-stroke:0.22px #e2e2e2;">*** Start Files operations ***</span>
<span class="t" style="left:626.31px;top:194px;font:normal 8.2px/12px 'Liberation Mono', monospace;color:#e2e2e2;transform:matrix(0.8094,0.0005,0,1,0,0.70);-webkit-text-stroke:0.22px #e2e2e2;">File TEST.TXT Created</span>
<span class="t" style="left:713.81px;top:209px;font:normal 8.2px/12px 'Liberation Mono', monospace;color:#e2e2e2;transform:matrix(0.8093,0.0005,0,1,0,0.02);-webkit-text-stroke:0.22px #e2e2e2;">Write Process ......</span>
<span class="t" style="left:797.32px;top:223px;font:normal 8.2px/12px 'Liberation Mono', monospace;color:#e2e2e2;transform:matrix(0.8094,0.0005,0,1,0,0.35);-webkit-text-stroke:0.22px #e2e2e2;">Write Process Success</span>
<span class="t" style="left:884.82px;top:237px;font:normal 8.2px/12px 'Liberation Mono', monospace;color:#e2e2e2;transform:matrix(0.8093,0.0005,0,1,0,0.67);-webkit-text-stroke:0.22px #e2e2e2;">Read Process  ......</span>
<span class="t" style="left:407.58px;top:259px;font:normal 8.2px/12px 'Liberation Mono', monospace;color:#e2e2e2;transform:matrix(0.8093,0.0005,0,1,0,0.16);-webkit-text-stroke:0.22px #e2e2e2;">Read Process Success</span>
<span class="t" style="left:495.07px;top:273px;font:normal 8.2px/12px 'Liberation Mono', monospace;color:#e2e2e2;transform:matrix(0.8094,0.0005,0,1,0,0.49);-webkit-text-stroke:0.22px #e2e2e2;">File Closed</span>
<span class="t" style="left:542.80px;top:287px;font:normal 8.2px/12px 'Liberation Mono', monospace;color:#e2e2e2;transform:matrix(0.8094,0.0005,0,1,0,0.81);-webkit-text-stroke:0.22px #e2e2e2;">*** End Files operations ***</span>
<div style="left:654.15px;top:303.93px;width:3.60px;height:7.00px;background:#ffffff;"></div>
<svg style="left:-1.60px;top:7.10px" width="6.40" height="6.40" viewBox="0 0 16 16" preserveAspectRatio="none"><rect x="0" y="1" width="15" height="14" fill="#fff" stroke="#9db7d6" stroke-width="1.2"/><rect x="0" y="3" width="12" height="4" fill="#4a90d9"/><path d="M11 0 L16 0 L16 6 Z" fill="#e8c25a"/><rect x="10" y="1" width="5" height="4" fill="#ecd27a"/></svg>
<svg style="left:8.80px;top:9.00px" width="4.90" height="2.80" viewBox="0 0 16 9" preserveAspectRatio="none"><path d="M0 0 H16 L8 9 Z" fill="#000"/></svg>
<svg style="left:17.90px;top:7.50px" width="5.60" height="5.60" viewBox="0 0 16 16" preserveAspectRatio="none"><path d="M1 1 H13 L15 3 V15 H1 Z" fill="#d9d9d9" stroke="#c4c4c4" stroke-width="1.2"/><rect x="4" y="1.5" width="8" height="5" fill="#e8e8e8"/><rect x="4" y="9.5" width="8" height="5" fill="#cfcfcf"/></svg>
<svg style="left:27.00px;top:7.30px" width="6.00" height="6.00" viewBox="0 0 16 16" preserveAspectRatio="none"><path d="M4 4 H14 L15.5 5.5 V15.5 H4 Z" fill="#d6d6d6" stroke="#c4c4c4" stroke-width="1.1"/><path d="M0.5 0.5 H10 L12 2.5 V12 H0.5 Z" fill="#dedede" stroke="#c8c8c8" stroke-width="1.1"/></svg>
<div style="left:35.00px;top:6.60px;width:0.80px;height:7.30px;background:#b4b4b4;"></div>
<svg style="left:39.60px;top:7.50px" width="5.60" height="5.60" viewBox="0 0 16 16" preserveAspectRatio="none"><path d="M2 0.5 H11 L14 3.5 V9 H2 Z" fill="#f3ead2" stroke="#d9c48a" stroke-width="1"/><rect x="0.5" y="7.5" width="15" height="8" rx="1" fill="#4a78ba"/><rect x="2.5" y="9.5" width="11" height="2" fill="#9dbbe3"/><rect x="2" y="13" width="12" height="2.5" fill="#2f5596"/></svg>
<div style="left:47.20px;top:6.60px;width:0.80px;height:7.30px;background:#e4e4e4;"></div>
<svg style="left:50.50px;top:7.35px" width="5.90" height="5.90" viewBox="0 0 16 16" preserveAspectRatio="none"><path d="M0.8 7 L6 2 V5 H11 Q15.2 5 15.2 9.2 Q15.2 13.5 11 13.5 H6.5 V11.5 H11 Q13 11.5 13 9.3 Q13 7.5 11 7.5 H6 V10 L3.5 12.5 Z" fill="#f1f1f1" stroke="#c2c2c2" stroke-width="1.5"/></svg>
<svg style="left:59.20px;top:7.50px" width="5.60" height="5.60" viewBox="0 0 16 16" preserveAspectRatio="none"><g transform="translate(16,0) scale(-1,1)"><path d="M0.8 7 L6 2 V5 H11 Q15.2 5 15.2 9.2 Q15.2 13.5 11 13.5 H6.5 V11.5 H11 Q13 11.5 13 9.3 Q13 7.5 11 7.5 H6 V10 L3.5 12.5 Z" fill="#f1f1f1" stroke="#c2c2c2" stroke-width="1.5"/></g></svg>
<div style="left:67.30px;top:6.60px;width:0.80px;height:7.30px;background:#e4e4e4;"></div>
<svg style="left:71.00px;top:7.00px" width="6.60" height="6.60" viewBox="0 0 16 16" preserveAspectRatio="none"><path d="M2.2 8.5 A5.6 5.2 0 0 0 13.6 10" fill="none" stroke="#d9a441" stroke-width="3.2"/><path d="M8 0.5 L14.5 4 L8 8 Z" fill="#2e9a4c"/></svg>
<svg style="left:80.80px;top:9.00px" width="4.90" height="2.80" viewBox="0 0 16 9" preserveAspectRatio="none"><path d="M0 0 H16 L8 9 Z" fill="#000"/></svg>
<div style="left:88.80px;top:6.60px;width:0.80px;height:7.30px;background:#e4e4e4;"></div>
<svg style="left:92.30px;top:7.75px" width="5.10" height="5.10" viewBox="0 0 16 16" preserveAspectRatio="none"><circle cx="8" cy="8.5" r="5.2" fill="#6f9fd0"/><circle cx="8" cy="8.5" r="2.4" fill="#a9c6e6"/><path d="M1 1 L15 15.5" stroke="#9a9a9a" stroke-width="1.6"/></svg>
<div style="left:100.00px;top:6.60px;width:0.80px;height:7.30px;background:#b4b4b4;"></div>
<svg style="left:104.60px;top:7.45px" width="5.70" height="5.70" viewBox="0 0 16 16" preserveAspectRatio="none"><rect x="0" y="0.5" width="9.5" height="9.5" fill="#e4243a"/><path d="M8 7.5 L16 11.5 L8 15.8 Z" fill="#2e9a4c"/></svg>
<svg style="left:113.00px;top:7.10px" width="6.40" height="6.40" viewBox="0 0 16 16" preserveAspectRatio="none"><rect x="0.3" y="2.5" width="5" height="11.5" fill="#e4bd42" stroke="#c79a2a" stroke-width="0.9"/><path d="M7 2 L16 8.2 L7 14.5 Z" fill="#2e9a4c"/></svg>
<svg style="left:123.20px;top:7.50px" width="4.40" height="5.60" viewBox="0 0 16 16" preserveAspectRatio="none"><rect x="0.8" y="1" width="5" height="14" fill="#ededed" stroke="#cdcdcd" stroke-width="1.6"/><rect x="10.2" y="1" width="5" height="14" fill="#ededed" stroke="#cdcdcd" stroke-width="1.6"/></svg>
<svg style="left:132.20px;top:7.80px" width="5.00" height="5.00" viewBox="0 0 16 16" preserveAspectRatio="none"><rect x="0" y="0" width="16" height="16" rx="1" fill="#e8242e"/></svg>
<svg style="left:140.60px;top:7.45px" width="5.70" height="5.70" viewBox="0 0 16 16" preserveAspectRatio="none"><rect x="0" y="0" width="16" height="16" fill="#f7e9ea"/><path d="M2.5 14 V4 L13.5 12 V2" fill="none" stroke="#e0303a" stroke-width="2.6"/><circle cx="2.8" cy="13.5" r="2" fill="#e0303a"/><circle cx="13.3" cy="2.5" r="2" fill="#e0303a"/></svg>
<svg style="left:149.70px;top:7.10px" width="6.40" height="6.40" viewBox="0 0 16 16" preserveAspectRatio="none"><path d="M1 3.5 H6 Q11.5 3.5 11.5 9 V10" fill="none" stroke="#d9a84a" stroke-width="3.4"/><path d="M7.5 8.5 H15.5 L11.5 13 Z" fill="#d9a84a"/><rect x="0.5" y="12" width="4" height="3.2" fill="#3a6ea8"/><rect x="11.5" y="12.5" width="4" height="3" fill="#3a6ea8"/></svg>
<svg style="left:158.80px;top:7.10px" width="6.40" height="6.40" viewBox="0 0 16 16" preserveAspectRatio="none"><path d="M2.5 10 Q2.5 3 8 3 Q13 3 13.5 8" fill="none" stroke="#d9a84a" stroke-width="3.4"/><path d="M9.5 6.5 H16 L13 11.5 Z" fill="#d9a84a"/><rect x="6" y="12" width="4" height="3.2" fill="#3a6ea8"/></svg>
<svg style="left:168.00px;top:6.95px" width="6.70" height="6.70" viewBox="0 0 16 16" preserveAspectRatio="none"><path d="M4 12 L11 4" fill="none" stroke="#d9a84a" stroke-width="3.6"/><path d="M7 1.5 H14.5 V9 Z" fill="#d9a84a"/><rect x="0.5" y="12.2" width="4" height="3" fill="#3a6ea8"/><rect x="11.5" y="12.2" width="4" height="3" fill="#3a6ea8"/></svg>
<div style="left:176.00px;top:6.60px;width:1.00px;height:7.30px;background:#b0b0b0;"></div>
<svg style="left:179.90px;top:7.10px" width="6.40" height="6.40" viewBox="0 0 16 16" preserveAspectRatio="none"><rect x="1.5" y="5" width="3.6" height="9.5" fill="#2525a5"/><circle cx="3.3" cy="2.2" r="2" fill="#2525a5"/><rect x="0.5" y="13" width="5.6" height="2" fill="#2525a5"/><path d="M6.5 6.5 H11 V3.5 L16 8.2 L11 13 V10 H6.5 Z" fill="#c2a428"/></svg>
<svg style="left:189.70px;top:7.15px" width="6.30" height="6.30" viewBox="0 0 16 16" preserveAspectRatio="none"><rect x="0.5" y="1" width="13" height="11" fill="#dadada" stroke="#c6c6c6" stroke-width="1"/><path d="M0.5 4.5 H13.5 M0.5 8 H13.5" stroke="#c0c0c0" stroke-width="1"/><path d="M10 10 L15.5 15.5" stroke="#c6c6c6" stroke-width="2"/></svg>
<svg style="left:198.50px;top:7.15px" width="6.30" height="6.30" viewBox="0 0 16 16" preserveAspectRatio="none"><path d="M2 13 L13 2.5 M6 3 L13.5 11" stroke="#d0d0d0" stroke-width="2.2" fill="none"/><rect x="0.5" y="12.5" width="3.5" height="3" fill="#c8c8c8"/><rect x="12" y="12.5" width="3.5" height="3" fill="#c8c8c8"/></svg>
<div style="left:207.20px;top:6.60px;width:0.80px;height:7.30px;background:#e4e4e4;"></div>
<svg style="left:210.00px;top:7.30px" width="6.00" height="6.00" viewBox="0 0 16 16" preserveAspectRatio="none"><ellipse cx="8" cy="10.5" rx="6.2" ry="4.6" fill="#e6e6e6" stroke="#9a9a9a" stroke-width="1.8"/><rect x="6" y="0.5" width="4" height="5" fill="#a8a8a8"/><path d="M5 9.5 Q8 12 11 9.5" stroke="#9a9a9a" stroke-width="1.3" fill="none"/></svg>
<div style="left:218.20px;top:6.60px;width:0.80px;height:7.30px;background:#e4d8d4;"></div>
<svg style="left:222.00px;top:7.60px" width="5.40" height="5.40" viewBox="0 0 16 16" preserveAspectRatio="none"><path d="M3 1.5 L11 2 L15 8 L12 14.5 L4.5 14 L1 8 Z" fill="#5f9e92"/><path d="M6 6 L11 8.5 L6.5 11 Z" fill="#e9f6e0"/><circle cx="7.5" cy="8.3" r="2.2" fill="#cfe8c8"/></svg>
<svg style="left:231.40px;top:9.00px" width="4.60" height="2.80" viewBox="0 0 16 9" preserveAspectRatio="none"><path d="M0 0 H16 L8 9 Z" fill="#000"/></svg>
<svg style="left:240.50px;top:7.40px" width="5.80" height="5.80" viewBox="0 0 16 16" preserveAspectRatio="none"><circle cx="8" cy="8" r="7.5" fill="#2c8a2f"/><circle cx="8" cy="8" r="5.4" fill="#3fa343"/><path d="M6 4.3 L12 8 L6 11.8 Z" fill="#fff"/></svg>
<svg style="left:250.70px;top:9.00px" width="4.50" height="2.80" viewBox="0 0 16 9" preserveAspectRatio="none"><path d="M0 0 H16 L8 9 Z" fill="#000"/></svg>
<svg style="left:259.20px;top:6.80px" width="7.00" height="7.00" viewBox="0 0 16 16" preserveAspectRatio="none"><circle cx="6" cy="6" r="5.6" fill="#2c8a2f"/><path d="M4.8 3.4 L8.8 6 L4.8 8.8 Z" fill="#fff"/><ellipse cx="11.3" cy="12.2" rx="4.7" ry="3.4" fill="#d9242c"/></svg>
<svg style="left:269.80px;top:9.00px" width="4.60" height="2.80" viewBox="0 0 16 9" preserveAspectRatio="none"><path d="M0 0 H16 L8 9 Z" fill="#000"/></svg>
<div style="left:277.00px;top:6.60px;width:0.80px;height:7.30px;background:#e4e4e4;"></div>
<svg style="left:280.30px;top:6.95px" width="6.70" height="6.70" viewBox="0 0 16 16" preserveAspectRatio="none"><path d="M2 14 L12.5 2.5" stroke="#e9b456" stroke-width="5"/><path d="M3 13.5 L12 3.5" stroke="#f7dc9a" stroke-width="1.6"/><path d="M10 1 L15 6" stroke="#a9a9a9" stroke-width="2.2"/><path d="M0.5 15.5 L3 10.5 L5.5 13 Z" fill="#8a8a8a"/></svg>
<svg style="left:290.80px;top:9.00px" width="4.60" height="2.80" viewBox="0 0 16 9" preserveAspectRatio="none"><path d="M0 0 H16 L8 9 Z" fill="#000"/></svg>
<div style="left:298.10px;top:6.60px;width:0.80px;height:7.30px;background:#e4e4e4;"></div>
<svg style="left:302.00px;top:7.20px" width="6.20" height="6.20" viewBox="0 0 16 16" preserveAspectRatio="none"><rect x="8" y="1" width="7" height="14" fill="#ececec" stroke="#cfcfcf" stroke-width="0.9"/><path d="M3 0.5 H8 V7 H11 L5.5 13 L0 7 H3 Z" fill="#dba63a"/><rect x="3" y="13.5" width="5" height="2" fill="#4a86c8"/></svg>
<svg style="left:311.90px;top:9.00px" width="4.50" height="2.80" viewBox="0 0 16 9" preserveAspectRatio="none"><path d="M0 0 H16 L8 9 Z" fill="#000"/></svg>
<svg style="left:321.00px;top:7.20px" width="6.20" height="6.20" viewBox="0 0 16 16" preserveAspectRatio="none"><rect x="8.5" y="1" width="6.5" height="14" fill="#ececec" stroke="#cfcfcf" stroke-width="0.9"/><path d="M3 15.5 H8 V8.5 H11 L5.5 2.5 L0 8.5 H3 Z" fill="#dba63a"/><rect x="3" y="0" width="5" height="1.8" fill="#9dbbe0"/></svg>
<svg style="left:331.00px;top:9.00px" width="4.50" height="2.80" viewBox="0 0 16 9" preserveAspectRatio="none"><path d="M0 0 H16 L8 9 Z" fill="#000"/></svg>
<svg style="left:339.50px;top:7.05px" width="6.50" height="6.50" viewBox="0 0 16 16" preserveAspectRatio="none"><path d="M1 8.5 L6.5 3.5 V6.2 H13 Q15.3 6.2 15.3 8.3 V12.5 H12 V10.8 H6.5 V13.5 Z" fill="#efefef" stroke="#bcbcbc" stroke-width="1.1"/></svg>
<svg style="left:348.50px;top:7.05px" width="6.50" height="6.50" viewBox="0 0 16 16" preserveAspectRatio="none"><g transform="translate(16,0) scale(-1,1)"><path d="M1 8.5 L6.5 3.5 V6.2 H13 Q15.3 6.2 15.3 8.3 V12.5 H12 V10.8 H6.5 V13.5 Z" fill="#efefef" stroke="#bcbcbc" stroke-width="1.1"/></g></svg>
<svg style="left:358.00px;top:7.00px" width="6.60" height="6.60" viewBox="0 0 16 16" preserveAspectRatio="none"><path d="M0.8 8 L7 2.5 V5.5 H15 V10.5 H7 V13.5 Z" fill="#f0c460" stroke="#d99a2a" stroke-width="1.1"/></svg>
<svg style="left:368.50px;top:9.00px" width="4.50" height="2.80" viewBox="0 0 16 9" preserveAspectRatio="none"><path d="M0 0 H16 L8 9 Z" fill="#000"/></svg>
<svg style="left:377.00px;top:7.20px" width="6.20" height="6.20" viewBox="0 0 16 16" preserveAspectRatio="none"><path d="M15.2 8 L9 2.5 V5.5 H1 V10.5 H9 V13.5 Z" fill="#f3f3f3" stroke="#c4c4c4" stroke-width="1.1"/></svg>
<svg style="left:387.50px;top:9.00px" width="4.50" height="2.80" viewBox="0 0 16 9" preserveAspectRatio="none"><path d="M0 0 H16 L8 9 Z" fill="#6e6e6e"/></svg>
<div style="left:395.15px;top:6.60px;width:0.90px;height:7.30px;background:#b0b0b0;"></div>
<svg style="left:399.00px;top:6.95px" width="6.70" height="6.70" viewBox="0 0 16 16" preserveAspectRatio="none"><rect x="0.7" y="2.5" width="12.5" height="12.5" fill="#fbfbfb" stroke="#8aa7c8" stroke-width="1.2"/><rect x="0.7" y="2.5" width="12.5" height="3.3" fill="#4a86c8"/><path d="M9 7.5 L15 1.5" stroke="#2e9a4c" stroke-width="2.6"/><circle cx="13.5" cy="2.5" r="2.4" fill="#2e9a4c"/></svg>
<div style="left:407.45px;top:6.60px;width:0.90px;height:7.30px;background:#b0b0b0;"></div>
<svg style="left:411.60px;top:7.25px" width="6.10" height="6.10" viewBox="0 0 16 16" preserveAspectRatio="none"><circle cx="8" cy="8" r="8" fill="#1565b0"/><rect x="6.7" y="6.5" width="2.8" height="6.5" fill="#fff"/><circle cx="8.1" cy="3.9" r="1.6" fill="#fff"/></svg>
<svg style="left:966.80px;top:6.80px" width="7.00" height="7.00" viewBox="0 0 16 16" preserveAspectRatio="none"><circle cx="6.2" cy="6.2" r="4.6" fill="none" stroke="#555" stroke-width="1.8"/><path d="M9.5 9.5 L15 15" stroke="#555" stroke-width="2.2"/></svg>
<div style="left:979.90px;top:6.80px;width:0.80px;height:7.00px;background:#d4d4d4;"></div>
<svg style="left:982.50px;top:7.15px" width="6.30" height="6.30" viewBox="0 0 16 16" preserveAspectRatio="none"><rect x="0.7" y="3.5" width="12" height="11.5" fill="#eef3f9" stroke="#7f9bc0" stroke-width="1.2"/><rect x="0.7" y="3.5" width="12" height="3" fill="#6f9fd8"/><path d="M9 0 H16 V7 Z" fill="#e8c25a"/></svg>
<div style="left:990.90px;top:6.80px;width:0.80px;height:7.00px;background:#b0b0b0;"></div>
<svg style="left:995.20px;top:7.15px" width="6.30" height="6.30" viewBox="0 0 16 16" preserveAspectRatio="none"><rect x="0.7" y="1" width="14" height="11" fill="#dfe9f5" stroke="#5f7fa8" stroke-width="1.3"/><rect x="3" y="13" width="10" height="2.5" fill="#5f7fa8"/></svg>
<svg style="left:-2.20px;top:20.30px" width="5.80" height="5.80" viewBox="0 0 16 16" preserveAspectRatio="none"><ellipse cx="8" cy="9" rx="6" ry="5.5" fill="#5fa08e"/><ellipse cx="8" cy="9" rx="3" ry="3" fill="#d8eee0"/><path d="M8 3 V0.5 M2 5 L0 3 M14 5 L16 3" stroke="#4a7f9a" stroke-width="1.4"/></svg>
<svg style="left:38.30px;top:20.20px" width="6.00" height="6.00" viewBox="0 0 16 16" preserveAspectRatio="none"><path d="M1.5 6 H14.5 V15 H1.5 Z" fill="#f0cf6e" stroke="#caa23a" stroke-width="1.1"/><path d="M1.5 6 V3.2 H7 L8.5 6 Z" fill="#e4b94a" stroke="#caa23a" stroke-width="1"/><path d="M0.8 0.8 H5.5 V4.5 H0.8 Z" fill="#dfe8f5" stroke="#8aa7d0" stroke-width="1"/></svg>
<svg style="left:108.20px;top:18.40px" width="5.60" height="5.60" viewBox="0 0 16 16" preserveAspectRatio="none"><rect x="1" y="1" width="14" height="14" rx="1.5" fill="#edf4fc" stroke="#7fb0e4" stroke-width="2"/><rect x="4" y="7" width="8" height="2" fill="#5f98d8"/></svg>
<svg style="left:116.80px;top:17.90px" width="6.60" height="6.60" viewBox="0 0 16 16" preserveAspectRatio="none"><path d="M1 2 L15 14 M15 2 L1 14 M8 1 V15 M1 8 H15" stroke="#c2c2c2" stroke-width="1.8"/><rect x="4.5" y="5" width="7" height="6" fill="#cdcdcd"/></svg>
<div style="left:125.25px;top:17.60px;width:0.90px;height:7.20px;background:#a8a8a8;"></div>
<svg style="left:128.80px;top:17.90px" width="6.60" height="6.60" viewBox="0 0 16 16" preserveAspectRatio="none"><rect x="1.5" y="5" width="3.6" height="9.5" fill="#2525a5"/><circle cx="3.3" cy="2.2" r="2" fill="#2525a5"/><rect x="0.5" y="13" width="5.6" height="2" fill="#2525a5"/><path d="M6.5 6.5 H11 V3.5 L16 8.2 L11 13 V10 H6.5 Z" fill="#c2a428"/></svg>
<div style="left:140.70px;top:18.40px;width:1.10px;height:5.60px;background:#b9b9b9;"></div>
<svg style="left:148.00px;top:18.10px" width="4.90" height="2.40" viewBox="0 0 16 16" preserveAspectRatio="none"><rect x="0.5" y="0.5" width="15" height="15" rx="3" fill="#5a5a5a"/><rect x="3" y="6" width="10" height="5" fill="#e4e4e4"/></svg>
<svg style="left:157.00px;top:18.20px" width="5.00" height="4.60" viewBox="0 0 16 16" preserveAspectRatio="none"><rect x="1" y="1" width="14" height="14" fill="#f4f4f4" stroke="#3c3c3c" stroke-width="2"/><rect x="1" y="1" width="14" height="4" fill="#3c3c3c"/></svg>
<svg style="left:-2.20px;top:34.76px" width="3.80" height="2.28" viewBox="0 0 16 10" preserveAspectRatio="none"><path d="M1.5 1.5 L8 8 L14.5 1.5" fill="none" stroke="#6a6a6a" stroke-width="2.6"/></svg>
<svg style="left:7.60px;top:45.01px" width="3.80" height="2.28" viewBox="0 0 16 10" preserveAspectRatio="none"><path d="M1.5 1.5 L8 8 L14.5 1.5" fill="none" stroke="#6a6a6a" stroke-width="2.6"/></svg>
<svg style="left:17.40px;top:56.16px" width="3.80" height="2.28" viewBox="0 0 16 10" preserveAspectRatio="none"><path d="M1.5 1.5 L8 8 L14.5 1.5" fill="none" stroke="#6a6a6a" stroke-width="2.6"/></svg>
<svg style="left:6.30px;top:31.30px" width="6.50" height="6.80" viewBox="0 0 16 16" preserveAspectRatio="none"><rect x="0" y="0" width="16" height="16" rx="1.5" fill="#2ea3ee"/><rect x="2.3" y="6" width="5" height="4.6" fill="#d7efff"/><rect x="8.6" y="6" width="5" height="4.6" fill="#d7efff"/><rect x="2.3" y="2.6" width="11.4" height="1.6" fill="#8fd0fa"/></svg>
<svg style="left:16.00px;top:43.20px" width="6.30" height="5.70" viewBox="0 0 16 16" preserveAspectRatio="none"><rect x="1" y="5.5" width="11" height="9.5" fill="#e9bd3a"/><rect x="3" y="8.5" width="5" height="3.5" fill="#f8e7a8"/><circle cx="10.5" cy="5" r="4.4" fill="#efc64e" stroke="#c7962a" stroke-width="1"/><path d="M10.5 9 Q15.5 9.5 15 14.5" fill="none" stroke="#3b78c4" stroke-width="2.4"/><circle cx="3" cy="3.5" r="2.2" fill="#5f93d4"/></svg>
<svg style="left:25.90px;top:54.60px" width="5.70" height="5.60" viewBox="0 0 16 16" preserveAspectRatio="none"><circle cx="10.5" cy="5" r="4.5" fill="#e2aa36" stroke="#a8741e" stroke-width="1.2"/><path d="M1.5 14 L8 7.5" stroke="#c8912c" stroke-width="4.2"/><rect x="0.5" y="11" width="6" height="4.5" fill="#dcae4a"/><circle cx="11" cy="4.6" r="1.4" fill="#7a4e14"/></svg>
<svg style="left:35.90px;top:66.10px" width="4.70" height="4.30" viewBox="0 0 16 14.4" preserveAspectRatio="none"><rect x="0" y="0" width="16" height="14.4" fill="#a9c4e4"/><rect x="0" y="0" width="16" height="3.7" fill="#4f86c6"/><rect x="0" y="5.3" width="16" height="3.7" fill="#4f86c6"/><rect x="0" y="10.7" width="16" height="3.7" fill="#4f86c6"/><rect x="7.2" y="0" width="1.4" height="14.4" fill="#7fa9da"/></svg>
<svg style="left:35.90px;top:77.25px" width="4.70" height="4.30" viewBox="0 0 16 14.4" preserveAspectRatio="none"><rect x="0" y="0" width="16" height="14.4" fill="#a9c4e4"/><rect x="0" y="0" width="16" height="3.7" fill="#4f86c6"/><rect x="0" y="5.3" width="16" height="3.7" fill="#4f86c6"/><rect x="0" y="10.7" width="16" height="3.7" fill="#4f86c6"/><rect x="7.2" y="0" width="1.4" height="14.4" fill="#7fa9da"/></svg>
<svg style="left:35.90px;top:88.40px" width="4.70" height="4.30" viewBox="0 0 16 14.4" preserveAspectRatio="none"><rect x="0" y="0" width="16" height="14.4" fill="#a9c4e4"/><rect x="0" y="0" width="16" height="3.7" fill="#4f86c6"/><rect x="0" y="5.3" width="16" height="3.7" fill="#4f86c6"/><rect x="0" y="10.7" width="16" height="3.7" fill="#4f86c6"/><rect x="7.2" y="0" width="1.4" height="14.4" fill="#7fa9da"/></svg>
<svg style="left:35.90px;top:99.55px" width="4.70" height="4.30" viewBox="0 0 16 14.4" preserveAspectRatio="none"><rect x="0" y="0" width="16" height="14.4" fill="#a9c4e4"/><rect x="0" y="0" width="16" height="3.7" fill="#4f86c6"/><rect x="0" y="5.3" width="16" height="3.7" fill="#4f86c6"/><rect x="0" y="10.7" width="16" height="3.7" fill="#4f86c6"/><rect x="7.2" y="0" width="1.4" height="14.4" fill="#7fa9da"/></svg>
<svg style="left:35.90px;top:110.70px" width="4.70" height="4.30" viewBox="0 0 16 14.4" preserveAspectRatio="none"><rect x="0" y="0" width="16" height="14.4" fill="#a9c4e4"/><rect x="0" y="0" width="16" height="3.7" fill="#4f86c6"/><rect x="0" y="5.3" width="16" height="3.7" fill="#4f86c6"/><rect x="0" y="10.7" width="16" height="3.7" fill="#4f86c6"/><rect x="7.2" y="0" width="1.4" height="14.4" fill="#7fa9da"/></svg>
<svg style="left:35.90px;top:121.85px" width="4.70" height="4.30" viewBox="0 0 16 14.4" preserveAspectRatio="none"><rect x="0" y="0" width="16" height="14.4" fill="#a9c4e4"/><rect x="0" y="0" width="16" height="3.7" fill="#4f86c6"/><rect x="0" y="5.3" width="16" height="3.7" fill="#4f86c6"/><rect x="0" y="10.7" width="16" height="3.7" fill="#4f86c6"/><rect x="7.2" y="0" width="1.4" height="14.4" fill="#7fa9da"/></svg>
<svg style="left:35.90px;top:133.00px" width="4.70" height="4.30" viewBox="0 0 16 14.4" preserveAspectRatio="none"><rect x="0" y="0" width="16" height="14.4" fill="#a9c4e4"/><rect x="0" y="0" width="16" height="3.7" fill="#4f86c6"/><rect x="0" y="5.3" width="16" height="3.7" fill="#4f86c6"/><rect x="0" y="10.7" width="16" height="3.7" fill="#4f86c6"/><rect x="7.2" y="0" width="1.4" height="14.4" fill="#7fa9da"/></svg>
<svg style="left:35.90px;top:144.15px" width="4.70" height="4.30" viewBox="0 0 16 14.4" preserveAspectRatio="none"><rect x="0" y="0" width="16" height="14.4" fill="#a9c4e4"/><rect x="0" y="0" width="16" height="3.7" fill="#4f86c6"/><rect x="0" y="5.3" width="16" height="3.7" fill="#4f86c6"/><rect x="0" y="10.7" width="16" height="3.7" fill="#4f86c6"/><rect x="7.2" y="0" width="1.4" height="14.4" fill="#7fa9da"/></svg>
<svg style="left:35.90px;top:155.30px" width="4.70" height="4.30" viewBox="0 0 16 14.4" preserveAspectRatio="none"><rect x="0" y="0" width="16" height="14.4" fill="#a9c4e4"/><rect x="0" y="0" width="16" height="3.7" fill="#4f86c6"/><rect x="0" y="5.3" width="16" height="3.7" fill="#4f86c6"/><rect x="0" y="10.7" width="16" height="3.7" fill="#4f86c6"/><rect x="7.2" y="0" width="1.4" height="14.4" fill="#7fa9da"/></svg>
<svg style="left:35.90px;top:166.45px" width="4.70" height="4.30" viewBox="0 0 16 14.4" preserveAspectRatio="none"><rect x="0" y="0" width="16" height="14.4" fill="#a9c4e4"/><rect x="0" y="0" width="16" height="3.7" fill="#4f86c6"/><rect x="0" y="5.3" width="16" height="3.7" fill="#4f86c6"/><rect x="0" y="10.7" width="16" height="3.7" fill="#4f86c6"/><rect x="7.2" y="0" width="1.4" height="14.4" fill="#7fa9da"/></svg>
<svg style="left:35.90px;top:177.60px" width="4.70" height="4.30" viewBox="0 0 16 14.4" preserveAspectRatio="none"><rect x="0" y="0" width="16" height="14.4" fill="#a9c4e4"/><rect x="0" y="0" width="16" height="3.7" fill="#4f86c6"/><rect x="0" y="5.3" width="16" height="3.7" fill="#4f86c6"/><rect x="0" y="10.7" width="16" height="3.7" fill="#4f86c6"/><rect x="7.2" y="0" width="1.4" height="14.4" fill="#7fa9da"/></svg>
<svg style="left:15.90px;top:188.30px" width="5.70" height="5.60" viewBox="0 0 16 16" preserveAspectRatio="none"><rect x="8" y="0.5" width="6.5" height="15" fill="#9a9a9a"/><rect x="9.6" y="2.5" width="3.4" height="1.6" fill="#ececec"/><rect x="9.6" y="5.5" width="3.4" height="1.2" fill="#d0d0d0"/><rect x="0.5" y="8.5" width="7.5" height="6.5" fill="#3f9a52"/><rect x="1.8" y="10" width="4.6" height="2.6" fill="#bfe6c4"/><rect x="0" y="14.6" width="15.5" height="1.4" fill="#777"/></svg>
<svg style="left:15.90px;top:199.45px" width="5.70" height="5.60" viewBox="0 0 16 16" preserveAspectRatio="none"><rect x="8" y="0.5" width="6.5" height="15" fill="#9a9a9a"/><rect x="9.6" y="2.5" width="3.4" height="1.6" fill="#ececec"/><rect x="9.6" y="5.5" width="3.4" height="1.2" fill="#d0d0d0"/><rect x="0.5" y="8.5" width="7.5" height="6.5" fill="#3f9a52"/><rect x="1.8" y="10" width="4.6" height="2.6" fill="#bfe6c4"/><rect x="0" y="14.6" width="15.5" height="1.4" fill="#777"/></svg>
<svg style="left:170.30px;top:20.20px" width="4.90" height="6.20" viewBox="0 0 16 16" preserveAspectRatio="none"><path d="M1 0.5 H10 L15 5 V15.5 H1 Z" fill="#fdfdfd" stroke="#9a9aa8" stroke-width="1.2"/><path d="M4 13 Q3 7 6 7 Q9 7 8 13" fill="none" stroke="#c23aa8" stroke-width="2"/><rect x="10" y="8" width="2.6" height="6" fill="#7a4ab8"/></svg>
<svg style="left:230.60px;top:20.10px" width="4.80" height="6.20" viewBox="0 0 16 16" preserveAspectRatio="none"><path d="M1 0.5 H10 L15 5 V15.5 H1 Z" fill="#fdfdfd" stroke="#8ea2c0" stroke-width="1.2"/><path d="M11 7 Q6 5.5 5.5 10 Q6 14 11 12.6" fill="none" stroke="#3f78c2" stroke-width="2.4"/></svg>
<svg style="left:270.40px;top:20.10px" width="4.90" height="6.20" viewBox="0 0 16 16" preserveAspectRatio="none"><path d="M1 0.5 H10 L15 5 V15.5 H1 Z" fill="#fdfdfd" stroke="#8ea2c0" stroke-width="1.2"/><path d="M11 6.5 Q6 5 6 8 Q6 10 9 10.3 Q12 11 10.5 13 Q8 14 5 13" fill="none" stroke="#3f78c2" stroke-width="2.2"/></svg>
<svg style="left:699.00px;top:18.10px" width="4.80" height="2.40" viewBox="0 0 16 16" preserveAspectRatio="none"><rect x="0.5" y="0.5" width="15" height="15" rx="3" fill="#5a5a5a"/><rect x="3" y="6" width="10" height="5" fill="#e4e4e4"/></svg>
<svg style="left:707.80px;top:18.20px" width="5.00" height="4.60" viewBox="0 0 16 16" preserveAspectRatio="none"><rect x="1" y="1" width="14" height="14" fill="#f4f4f4" stroke="#3c3c3c" stroke-width="2"/><rect x="1" y="1" width="14" height="4" fill="#3c3c3c"/></svg>
<svg style="left:168.20px;top:31.75px" width="2.40" height="3.20" viewBox="0 0 16 16" preserveAspectRatio="none"><path d="M1 1 L15 8 L1 15 Z" fill="#3f7fd0"/></svg>
<svg style="left:720.40px;top:20.60px" width="6.00" height="4.40" viewBox="0 0 16 16" preserveAspectRatio="none"><path d="M0 8 H3.5 M12.5 8 H16" stroke="#5f9fdc" stroke-width="2.6"/><path d="M5 3 Q3.5 8 5 13 M11 3 Q12.5 8 11 13" fill="none" stroke="#5f9fdc" stroke-width="1.8"/><path d="M6.3 5.5 L9.7 10.5 M9.7 5.5 L6.3 10.5" stroke="#4a8fd4" stroke-width="1.8"/></svg>
<svg style="left:768.00px;top:20.40px" width="5.60" height="5.20" viewBox="0 0 16 16" preserveAspectRatio="none"><circle cx="4.5" cy="5" r="4" fill="#4f8fd4"/><circle cx="11" cy="11" r="4.4" fill="#5a9adc"/></svg>
<svg style="left:816.30px;top:19.80px" width="5.90" height="5.60" viewBox="0 0 16 16" preserveAspectRatio="none"><path d="M0.5 2 L5.5 7.5 M5.5 2 L0.5 7.5" stroke="#4f97d8" stroke-width="2"/><path d="M7.5 1.5 H15.5 M10 1.5 L8 12 M13.5 1.5 L14 9" stroke="#5aa0dc" stroke-width="2.2" fill="none"/><path d="M3 9.5 L8 15 M8 9.5 L3 15" stroke="#5aa0dc" stroke-width="2"/></svg>
<svg style="left:864.30px;top:20.30px" width="5.90" height="4.80" viewBox="0 0 16 16" preserveAspectRatio="none"><rect x="0" y="0.5" width="16" height="4" fill="#6fa4dc"/><rect x="0" y="6" width="16" height="3.6" fill="#8fb9e6"/><rect x="0" y="11" width="16" height="3.6" fill="#7aaade"/><rect x="4.5" y="1" width="1.2" height="13" fill="#f4f8fc"/><rect x="10.3" y="1" width="1.2" height="13" fill="#f4f8fc"/></svg>
<svg style="left:903.70px;top:19.80px" width="6.10" height="5.60" viewBox="0 0 16 16" preserveAspectRatio="none"><path d="M0.5 2 L5.5 7.5 M5.5 2 L0.5 7.5" stroke="#4f97d8" stroke-width="2"/><path d="M7.5 1.5 H15.5 M10 1.5 L8 12 M13.5 1.5 L14 9" stroke="#5aa0dc" stroke-width="2.2" fill="none"/><path d="M3 9.5 L8 15 M8 9.5 L3 15" stroke="#5aa0dc" stroke-width="2"/></svg>
<svg style="left:966.00px;top:20.70px" width="6.30" height="4.20" viewBox="0 0 16 16" preserveAspectRatio="none"><rect x="0" y="1.5" width="16" height="6.5" fill="#3e8a3e"/><rect x="0" y="8" width="16" height="6" fill="#c8a84a"/><rect x="1.5" y="3.2" width="13" height="2.2" fill="#8fd08f"/></svg>
<span class="t" style="left:995.60px;top:13px;font:normal 7.5px/12px 'Liberation Sans', sans-serif;color:#444;transform:matrix(1.0000,0.0005,0,1,0,0.20);-webkit-text-stroke:0.1px #444;">»</span>
<svg style="left:955.80px;top:30.60px" width="5.60" height="5.60" viewBox="0 0 16 16" preserveAspectRatio="none"><rect x="4" y="3" width="11" height="12" fill="#ececec" stroke="#c4c4c4" stroke-width="1.2"/><rect x="0.6" y="0.6" width="6" height="6" fill="#dedede" stroke="#c0c0c0" stroke-width="1"/></svg>
<div style="left:964.40px;top:29.60px;width:9.20px;height:7.80px;background:#cfe3f8;"></div>
<svg style="left:966.00px;top:30.60px" width="6.00" height="5.60" viewBox="0 0 16 16" preserveAspectRatio="none"><rect x="0.5" y="5" width="6" height="6" fill="#e8c25a" stroke="#b89030" stroke-width="1"/><rect x="9" y="1" width="6" height="5" fill="#d05a8a"/><rect x="9" y="10" width="6" height="5" fill="#5a8ad0"/><path d="M6.5 8 H8 V3.5 H9 M8 8 V12.5 H9" stroke="#7a7a7a" stroke-width="1" fill="none"/></svg>
<svg style="left:975.30px;top:30.70px" width="5.50" height="5.40" viewBox="0 0 16 16" preserveAspectRatio="none"><rect x="0.8" y="0.8" width="14.4" height="14.4" rx="2" fill="#f3f3f3" stroke="#c6c6c6" stroke-width="1.4"/><rect x="4" y="7" width="8" height="2" fill="#c0c0c0"/></svg>
<div style="left:983.30px;top:30.20px;width:0.80px;height:6.60px;background:#b4b4b4;"></div>
<svg style="left:987.00px;top:30.50px" width="6.00" height="5.80" viewBox="0 0 16 16" preserveAspectRatio="none"><rect x="0.8" y="3" width="13" height="12" fill="#fbfbfb" stroke="#4a86c8" stroke-width="1.5"/><rect x="0.8" y="3" width="13" height="3" fill="#4a86c8"/><path d="M10 0 H16 V6 Z" fill="#e8c25a"/></svg>
<svg style="left:996.60px;top:30.50px" width="6.00" height="5.80" viewBox="0 0 16 16" preserveAspectRatio="none"><rect x="0.8" y="3" width="13" height="12" fill="#fbfbfb" stroke="#4a86c8" stroke-width="1.5"/><rect x="0.8" y="3" width="13" height="3" fill="#4a86c8"/></svg>
<svg style="left:170.00px;top:393.80px" width="5.60" height="5.60" viewBox="0 0 16 16" preserveAspectRatio="none"><rect x="0.8" y="1" width="14.4" height="11" rx="1.5" fill="#dfeaf8" stroke="#4a78c0" stroke-width="1.7"/><rect x="3" y="3.5" width="10" height="5" fill="#6f9fe0"/><rect x="4" y="13.2" width="8" height="2" fill="#4a78c0"/></svg>
<svg style="left:215.00px;top:393.60px" width="5.40" height="6.00" viewBox="0 0 16 16" preserveAspectRatio="none"><rect x="2" y="0.5" width="11" height="15" fill="#fbf6e4" stroke="#d9c9a0" stroke-width="1"/><rect x="1" y="2" width="4" height="4" fill="#e0303a"/><rect x="1" y="9.5" width="4" height="4" fill="#e8b83a"/><rect x="7" y="3" width="5" height="1.6" fill="#7a9ad0"/><rect x="7" y="10.5" width="5" height="1.6" fill="#7a9ad0"/></svg>
<svg style="left:257.00px;top:393.80px" width="5.40" height="5.60" viewBox="0 0 16 16" preserveAspectRatio="none"><circle cx="8" cy="8" r="7" fill="#5a94dc"/><circle cx="8" cy="8" r="4.6" fill="#e6f0fb"/><path d="M6.5 5 L11.5 8 L6.5 11 Z" fill="#3f78c8"/></svg>
<svg style="left:304.50px;top:393.70px" width="5.80" height="5.80" viewBox="0 0 16 16" preserveAspectRatio="none"><rect x="0.8" y="0.8" width="11" height="9" fill="#e4ecf8" stroke="#3f6fb0" stroke-width="1.6"/><rect x="5" y="5.5" width="10.2" height="9.5" fill="#f4f8fd" stroke="#3f6fb0" stroke-width="1.6"/><circle cx="10" cy="10.3" r="2.6" fill="#3a9a5a"/></svg>
<svg style="left:376.60px;top:393.70px" width="3.00" height="5.80" viewBox="0 0 16 16" preserveAspectRatio="none"><rect x="1" y="1" width="14" height="14" rx="4" fill="#dfe9fb" stroke="#3f6fd0" stroke-width="3"/></svg>
<svg style="left:976.40px;top:393.20px" width="6.20" height="6.00" viewBox="0 0 16 16" preserveAspectRatio="none"><rect x="0.8" y="2.5" width="13.5" height="12" rx="1" fill="#eef3fa" stroke="#7f9bc0" stroke-width="1.3"/><rect x="0.8" y="2.5" width="13.5" height="3" fill="#7fa8dc"/><path d="M9.5 0 H16 V6.5 Z" fill="#e8c25a"/></svg>
<svg style="left:986.60px;top:395.00px" width="4.20" height="2.80" viewBox="0 0 16 9" preserveAspectRatio="none"><path d="M0 0 H16 L8 9 Z" fill="#000"/></svg>
<svg style="left:995.20px;top:394.00px" width="4.80" height="2.40" viewBox="0 0 16 16" preserveAspectRatio="none"><rect x="0.5" y="0.5" width="15" height="15" rx="3" fill="#5a5a5a"/></svg>
</body></html>
